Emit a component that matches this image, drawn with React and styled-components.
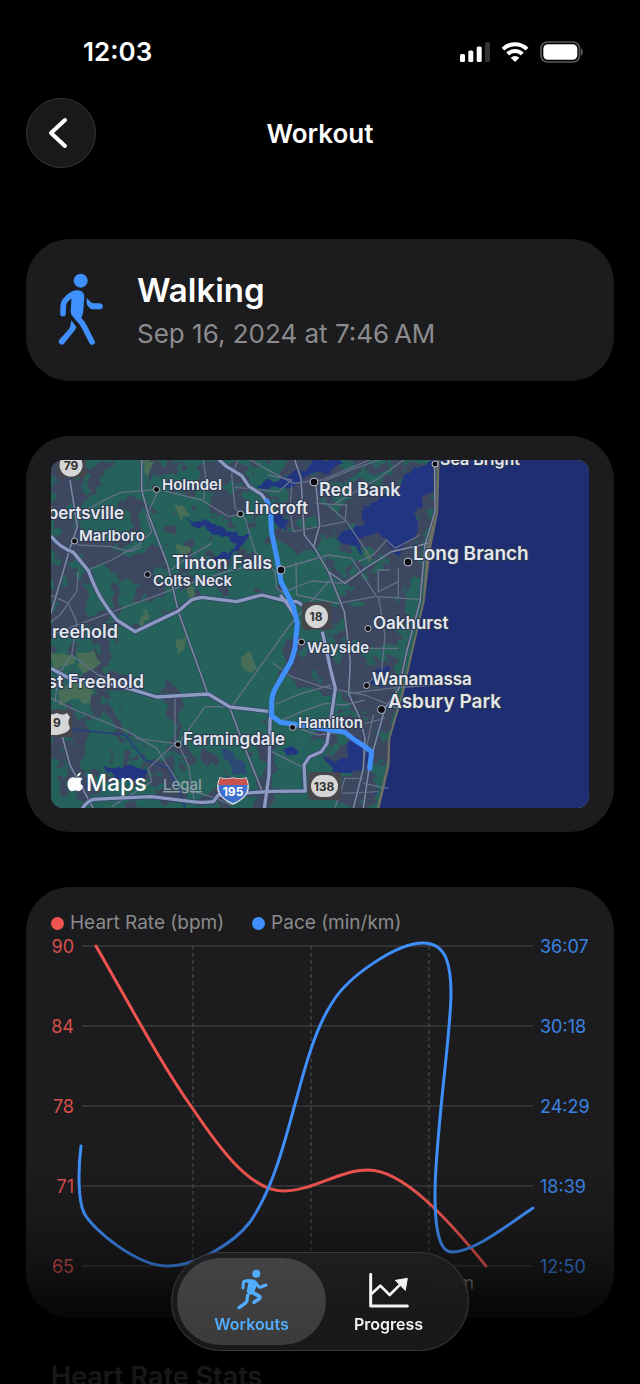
import React from 'react'
import styled, { createGlobalStyle, css } from 'styled-components'

const GlobalStyle = createGlobalStyle`
* {
    box-sizing: border-box;
}
body {
    margin: 0;
    background: #000;
    color: #fff;
    font-family: Inter, "Liberation Sans", sans-serif;
}
`

const Screen = styled.div`
position: relative;
height: 100vh;
display: flex;
flex-direction: column;
overflow: hidden;
background: #000;
`;

const StatusBar = styled.div`
display: flex;
align-items: center;
justify-content: space-between;
flex: none;
height: 84px;
padding: 20px 56px 0 83px;
`;

const Time = styled.span`
font-size: 26px;
font-weight: 600;
line-height: 32px;
`;

const StatusIcons = styled.div`
display: flex;
align-items: center;
gap: 11px;
`;

const NavBar = styled.header`
display: grid;
grid-template-columns: 70px 1fr 70px;
align-items: center;
flex: none;
margin-top: 14px;
padding: 0 26px;
`;

const BackButton = styled.button`
width: 70px;
height: 70px;
display: flex;
align-items: center;
justify-content: center;
padding: 0 6px 0 0;
border: 1px solid #363636;
border-radius: 50%;
background: #191919;
color: #fff;
cursor: pointer;
`;

const NavTitle = styled.h1`
margin: 0;
padding-top: 2px;
font-size: 26px;
font-weight: 600;
line-height: 32px;
text-align: center;
`;

const Content = styled.main`
flex: 1;
min-height: 0;
display: flex;
flex-direction: column;
gap: 55px;
padding: 71px 26px 0;
overflow-y: auto;
scrollbar-width: none;
`;

const Card = styled.section`
flex: none;
border-radius: 44px;
background: #1c1c1e;
padding: ${({ $pad }) => $pad};
`;

const Hero = styled.div`
display: flex;
align-items: center;
gap: 32px;
height: 86px;
`;

const HeroText = styled.div`
padding-top: 4px;
`;

const HeroTitle = styled.h2`
margin: 0;
font-size: 33px;
font-weight: 600;
line-height: 44px;
`;

const HeroDate = styled.p`
margin: 0;
font-size: 26px;
line-height: 44px;
color: #8b8b8d;
`;

const MapFrame = styled.div`
border-radius: 12px;
overflow: hidden;
background: #28625c;

svg {
    display: block;
    width: 100%;
    height: auto;
}
`;

const MapLabel = styled.text`
font-size: ${({ $size }) => $size}px;
font-weight: 600;
fill: #e3e7ee;
stroke: #2c3750;
stroke-width: 2px;
stroke-linejoin: round;
paint-order: stroke;
`;

const ShieldText = styled.text`
font-size: 12px;
font-weight: 700;
text-anchor: middle;
fill: ${({ $light }) => ($light ? '#fff' : '#333')};
`;

const MapsWordmark = styled.text`
font-size: 23px;
font-weight: 500;
fill: #fff;
`;

const LegalText = styled.text`
font-size: 15px;
font-weight: 500;
fill: #8ba3a6;
text-decoration: underline;
`;

const Legend = styled.div`
display: flex;
align-items: center;
gap: 28px;
height: 20px;
`;

const LegendItem = styled.span`
display: flex;
align-items: center;
gap: 6px;
font-size: 19px;
line-height: 20px;
color: #8b8b8d;

&::before {
    content: '';
    width: 13px;
    height: 13px;
    border-radius: 50%;
    background: ${({ $color }) => $color};
}
`;

const ChartSvg = styled.svg`
display: block;
width: 100%;
height: auto;
overflow: visible;
`;

const AxisText = styled.text`
font-size: 18px;
fill: ${({ $color }) => $color};
text-anchor: ${({ $end }) => ($end ? 'end' : 'start')};
`;

const StatsHeading = styled.h2`
flex: none;
margin: -12px 0 0;
padding-left: 25px;
font-size: 27px;
font-weight: 600;
line-height: 32px;
`;

const BottomFade = styled.div`
position: absolute;
left: 0;
right: 0;
bottom: 0;
height: 230px;
pointer-events: none;
background: linear-gradient(rgba(0,0,0,0), rgba(0,0,0,0.08) 25%, rgba(0,0,0,0.36) 49%, rgba(0,0,0,0.64) 63%, rgba(0,0,0,0.78) 72%, rgba(0,0,0,0.9) 85%, rgba(0,0,0,0.91));
`;

const TabBar = styled.nav`
position: absolute;
left: 50%;
bottom: 33px;
transform: translateX(-50%);
display: flex;
padding: 5px;
border: 1px solid #3b3b3b;
border-radius: 50px;
background: linear-gradient(rgba(32,32,32,0.88), rgba(27,27,27,0.92) 50%, rgba(25,25,25,0.97));
backdrop-filter: blur(2px);
`;

const Tab = styled.button`
width: 149px;
height: 87px;
display: flex;
flex-direction: column;
align-items: center;
justify-content: center;
gap: 3px;
padding: 0;
border: 0;
border-radius: 44px;
background: transparent;
color: #f2f2f2;
font-family: inherit;
font-size: 16px;
font-weight: 600;
line-height: 22px;
cursor: pointer;

& + & {
    margin-left: -12px;
}

${({ $active }) => $active && css`
background: linear-gradient(#434345, #3b3b3b);
color: #52adff;
`}
`;

const SignalIcon = () => (
    <svg width="30" height="22" viewBox="0 0 30 22" fill="#fff" aria-hidden="true">
        <rect x="0" y="13" width="5" height="8" rx="1.6" />
        <rect x="8.3" y="9.5" width="5" height="11.5" rx="1.6" />
        <rect x="16.7" y="5.5" width="5" height="15.5" rx="1.6" />
        <rect x="25" y="1" width="5" height="20" rx="1.6" fill="#333" />
    </svg>
)

const WifiIcon = () => (
    <svg width="28" height="22" viewBox="0 0 28 22" fill="none" stroke="#fff" strokeWidth="4" aria-hidden="true">
        <path d="M2 8.2A17 17 0 0 1 26 8.2" />
        <path d="M6.7 13A10.3 10.3 0 0 1 21.3 13" />
        <path d="M14 21L9.7 16.7a6 6 0 0 1 8.6 0z" fill="#fff" stroke="none" />
    </svg>
)

const BatteryIcon = () => (
    <svg width="44" height="22" viewBox="0 0 44 22" aria-hidden="true">
        <rect x="1" y="1" width="38.5" height="20" rx="6.5" fill="none" stroke="#5a5a5a" strokeWidth="1.7" />
        <rect x="3.3" y="3.3" width="34" height="15.4" rx="4.5" fill="#fff" />
        <path d="M41 7.5c2.6 1 2.6 6 0 7z" fill="#5a5a5a" />
    </svg>
)

const BackIcon = () => (
    <svg width="20" height="32" viewBox="0 0 20 32" fill="none" stroke="currentColor" strokeWidth="4" strokeLinecap="round" strokeLinejoin="round" aria-hidden="true">
        <path d="M17 3L3 16l14 13" />
    </svg>
)

const WalkIcon = () => (
    <svg width="47" height="74" viewBox="115 128 141 222" fill="none" stroke="#3f90fc" strokeWidth="17" strokeLinecap="round" strokeLinejoin="round" aria-hidden="true">
        <circle cx="183" cy="151" r="21" fill="#3f90fc" stroke="none" />
        <path d="M154 186Q164 180 174 180Q193 181 194 199L191 240Q190 254 186 261L178 268L156 255Q153 249 153 240L155 211Z" fill="#3f90fc" stroke="none" />
        <path d="M168 189Q158 190 148 199L138 209Q132 215 131 224L130 250" />
        <path d="M201 203L213 215Q217 219 223 219L241 219V237L219 237Q214 237 210 233L203 225Q201 222 201 218Z" fill="#3f90fc" stroke="none" />
        <circle cx="241" cy="228" r="8.5" fill="#3f90fc" stroke="none" />
        <path d="M168 256L187 278Q190 283 193 288L217 335" />
        <path d="M155 270L170 290Q168 298 163 303L132 341Q127 345 121 341Q115 336 119 328L148 296Q151 292 152 286Z" fill="#3f90fc" stroke="none" />
    </svg>
)

const RunIcon = () => (
    <svg width="34" height="42" viewBox="224 87 102 126" fill="none" stroke="currentColor" strokeWidth="9" strokeLinecap="round" strokeLinejoin="round" aria-hidden="true">
        <circle cx="288" cy="104" r="12" fill="currentColor" stroke="none" />
        <path d="M258 121H275Q285 121 289 130L291 134L283 155L284 162L268 168Q258 163 260 153L264 132Z" fill="currentColor" stroke="none" />
        <path d="M268 126H256Q250 126 249 132L248 147" />
        <path d="M286 131L295 143Q298 146 302 144L317 138" />
        <path d="M271 158L296 171Q301 174 297 179L281 190" strokeWidth="11" />
        <path d="M262 169L260 184Q259 189 254 193L236 206" strokeWidth="10" />
    </svg>
)

const ProgressIcon = () => (
    <svg width="42" height="42" viewBox="624 84 126 126" fill="none" stroke="currentColor" strokeWidth="9" strokeLinecap="round" strokeLinejoin="round" aria-hidden="true">
        <path d="M632 103V198H742" />
        <path d="M634 162L661 137L689 165L724 130" strokeWidth="8" />
        <path d="M707 121L742 115L736 150Z" fill="currentColor" strokeWidth="3" />
    </svg>
)

const places = [
    { name: 'Holmdel', x: 111, y: 30, size: 15, dot: [105.5, 29.5] },
    { name: 'Red Bank', x: 268, y: 36, size: 18, dot: [263, 22], big: true },
    { name: 'Lincroft', x: 194, y: 54, size: 17, dot: [189.5, 54] },
    { name: 'bertsville', x: 73, y: 59, size: 17, end: true },
    { name: 'Marlboro', x: 28, y: 81, size: 15, dot: [23.5, 81] },
    { name: 'Tinton Falls', x: 121, y: 109, size: 18, dot: [230, 110], big: true },
    { name: 'Colts Neck', x: 102, y: 126, size: 15, dot: [96.5, 114.5] },
    { name: 'Long Branch', x: 362, y: 100, size: 19, dot: [357, 102], big: true },
    { name: 'Sea Bright', x: 389, y: 5, size: 16, dot: [384, 4] },
    { name: 'Oakhurst', x: 322, y: 169, size: 17, dot: [317, 168.5] },
    { name: 'reehold', x: 67, y: 178, size: 18, end: true },
    { name: 'Wayside', x: 256, y: 193, size: 15, dot: [250.5, 182] },
    { name: 'st Freehold', x: 93, y: 228, size: 18, end: true },
    { name: 'Wanamassa', x: 321, y: 225, size: 17, dot: [315.5, 225.5] },
    { name: 'Asbury Park', x: 337, y: 248, size: 19, dot: [330.5, 249.5], big: true },
    { name: 'Hamilton', x: 247, y: 268, size: 15, dot: [241.5, 267.5] },
    { name: 'Farmingdale', x: 132, y: 285, size: 17, dot: [127, 284.5] },
]

// terrain and roads are drawn at three units per map pixel
const highways = [
    'M520 12L545 35L590 62L612 95L650 118L664 138',
    'M18 243Q40 275 85 292L130 347Q150 400 168 430Q190 465 215 495L270 530L400 468L440 434L470 427L575 440L650 420L715 436L755 440L780 455',
    'M18 640L70 668L165 681L250 700L335 726L490 717L555 756L670 769',
    'M832 530L856 640L871 700L858 790L846 865L829 890L793 906L777 930L781 1008L680 1009L520 1020L505 1040Q470 1044 440 1040L320 1025L200 1030L145 1033Q125 1040 112 1060',
    'M706 420Q755 480 757 510Q750 600 730 630Q690 690 682 735L675 800L672 960L658 1060',
]

const mediumRoads = [
    'M290 12V105L310 178L368 330L400 470L488 715',
    'M75 75L97 215L75 280L18 475',
    'M748 12L768 70L778 240L808 278L850 350L898 470L916 620L911 716L945 790L960 850L955 940L925 1060',
    'M1169 30L1170 170L1140 270L1125 440L1085 590L1062 700L1020 760L975 920L955 1060',
    'M52 845L75 930L115 1005L145 1060',
    'M812 80L824 210L806 275',
    'M850 350L900 385L960 340L1040 290L1150 265',
    'M555 760L600 880L650 1005',
]

const minorRoads = [
    'M100 180Q180 130 230 112L340 103L470 135L550 185L590 178',
    'M340 103L320 150L305 180L320 230L280 270L200 315L130 345',
    'M97 270L200 275L255 290L290 275',
    'M475 15L483 75L476 135',
    'M580 12L560 60L570 160L600 190L630 290L690 350L695 400L735 430',
    'M18 540L150 490L270 445L420 390L560 345L640 330',
    'M370 350L430 305L500 265',
    'M18 420L70 445L95 500L80 600L160 660L250 690',
    'M100 350L95 410L45 480L18 500',
    'M18 730L80 760L250 830L335 880L410 1000L500 1025L560 1050',
    'M80 600L40 660L30 740',
    'M390 730V865L310 940L320 980L200 1055',
    'M390 865L270 850',
    'M400 868L480 755H560L735 510L860 370',
    'M670 60L740 75L700 110L570 97',
    'M610 12L660 40L745 85L830 75L980 12',
    'M740 90L735 170L745 230L900 200L905 150L810 145',
    'M850 150L905 200L965 290',
    'M820 85L930 40L1010 12',
    'M870 145L1000 70L1080 12',
    'M720 410L800 378L890 385L980 330',
    'M695 345L850 300L920 310L995 425L1125 433',
    'M753 320L755 420L880 445L990 425',
    'M1000 345H1035M1000 345V410L1060 380V340M1060 380V430',
    'M1125 240L1050 280L1025 255L985 300L940 320',
    'M1000 425L1020 540L1010 650L960 690',
    'M940 580L1060 580M911 716L1030 700L1170 690',
    'M685 625L740 665L830 695L960 720L1060 760',
    'M685 750L770 715L860 690M700 800L770 770L840 745L900 750L960 735',
    'M745 815L820 840L900 830M960 805L1020 790',
    'M870 1060L900 970L955 970M955 985L1030 1000M890 1015L1000 1010',
    'M680 890L780 940M985 780L960 900',
    'M400 868L430 930L450 1050',
]

const slatePatches = [
    '18,15 60,15 110,60 120,120 95,150 70,120 50,200 18,210',
    '18,210 80,190 110,240 160,260 210,250 250,290 220,330 140,350 90,300 18,290',
    '240,290 330,270 350,310 330,350 360,390 340,420 290,430 260,390 220,400 210,350',
    '18,300 60,320 80,380 140,370 150,430 120,480 180,470 210,510 160,530 110,510 60,560 18,560',
    '330,15 420,15 380,50 350,40 320,70',
    '430,20 560,15 620,60 600,100 550,80 500,110 470,70',
    '520,100 590,110 620,150 570,190 530,160 490,170',
    '620,15 1170,15 1170,170 1060,620 1000,1060 900,1060 890,960 800,880 860,760 830,640 790,590 770,480 900,430 850,330 760,320 700,250 700,160 650,120',
    '740,540 860,520 910,640 900,760 820,830 740,810 760,700 710,650',
    '155,550 220,545 215,590 180,600 170,650 140,620',
    '110,640 240,640 260,680 200,700 180,740 150,710 90,690',
    '370,700 385,675 400,720 405,790 400,850 420,890 380,900 385,820 360,750',
    '50,760 110,770 140,810 110,860 70,850 70,900 50,930 30,890 18,860 18,780',
    '80,910 150,940 130,970 190,1000 120,1030 60,990',
    '300,930 370,900 400,950 380,1010 330,990',
    '640,830 710,850 770,880 760,940 700,930 690,1060 640,1060',
    '170,780 200,770 240,830 300,860 240,850 190,810',
]

const greenPatches = [
    '640,20 720,15 700,60 740,80 700,130 650,110 610,70',
    '730,290 810,270 820,330 790,350 840,420 790,440 740,420 715,370',
    '740,180 800,170 820,220 790,240 750,215',
    '850,100 950,60 1060,20 1010,70 920,110 880,125',
    '850,240 900,260 960,280 1020,300 950,350 880,340 840,300',
    '770,490 830,530 880,560 900,600 850,610 800,570 770,540',
    '930,570 1010,600 1040,590 1035,620 970,625',
    '720,700 850,700 900,740 880,800 790,840 730,800',
    '690,840 830,850 860,910 800,920 770,1010 710,1040 690,960',
    '880,770 950,760 940,790 890,800',
    '880,370 910,350 930,400 890,410',
]

const olivePatches = [
    '290,15 330,15 320,40 300,70',
    '395,150 425,160 440,185 410,195 390,175',
    '400,265 430,270 445,300 410,300 390,280',
    '590,610 620,595 635,640 610,655 588,635',
    '18,595 80,605 90,625 40,635 60,650 18,645',
    '100,595 150,592 160,625 130,650 95,640',
    '60,690 120,680 148,712 130,745 90,730 40,750 45,710',
    '395,560 420,545 425,580 395,605',
    '280,500 300,465 310,490 290,515',
    '420,400 445,390 450,430 430,440',
    '965,290 985,310 970,320 955,305',
]

const waterPatches = [
    '430,195 450,200 480,205 470,183 500,205 525,215 560,235 612,238 605,262 575,287 550,310 510,320 480,335 440,345 500,308 560,288 575,270 540,250 500,235 470,215 435,210',
    '640,90 680,75 720,70 745,55 790,40 810,15 890,15 870,45 830,55 790,60 760,85 720,100 690,95 650,105',
    '1080,60 1130,35 1165,15 1169,110 1140,115 1120,170 1118,230 1085,275 1050,300 1030,260 1000,235 935,250 950,295 915,270 870,250 910,225 955,210 950,175 990,130 1030,115 1040,100 1060,110',
    '690,165 720,200 735,195 715,225 690,200',
    '175,930 200,940 240,938 300,940 300,975 230,975 200,960',
    '715,880 740,870 762,890 735,905',
    '828,902 870,918 905,905 905,865 935,850 970,880 978,905 965,940 920,960 880,955 855,930',
    '1000,640 1035,630 1030,670 980,685 1060,700 970,690',
    '980,1010 1005,1000 985,1020',
]

const Road = styled.path`
fill: none;
stroke: ${({ $color }) => $color};
stroke-width: ${({ $width }) => $width};
stroke-linejoin: round;
`;

const Terrain = () => (
    <>
        <rect x="0" y="0" width="1640" height="1080" fill="#28625c" />
        {slatePatches.map((p) => <polygon key={p} points={p} fill="#3c475e" />)}
        {greenPatches.map((p) => <polygon key={p} points={p} fill="#28625c" />)}
    </>
)

const RouteMap = () => (
    <svg viewBox="0 0 538 348" role="img" aria-label="Route map">
        <defs>
            <filter id="rough" x="0" y="0" width="100%" height="100%">
                <feTurbulence type="fractalNoise" baseFrequency="0.06" numOctaves="3" seed="4" />
                <feDisplacementMap in="SourceGraphic" scale="34" xChannelSelector="R" yChannelSelector="G" />
            </filter>
            <filter id="roughWater" x="0" y="0" width="100%" height="100%">
                <feTurbulence type="fractalNoise" baseFrequency="0.1" numOctaves="2" seed="9" />
                <feDisplacementMap in="SourceGraphic" scale="10" xChannelSelector="R" yChannelSelector="G" />
            </filter>
            <filter id="slateSpecks" x="0" y="0" width="100%" height="100%" colorInterpolationFilters="sRGB">
                <feTurbulence type="fractalNoise" baseFrequency="0.055" numOctaves="3" seed="12" />
                <feColorMatrix values="0 0 0 0 0.235  0 0 0 0 0.278  0 0 0 0 0.369  18 0 0 0 -10.6" />
            </filter>
            <filter id="greenSpecks" x="0" y="0" width="100%" height="100%" colorInterpolationFilters="sRGB">
                <feTurbulence type="fractalNoise" baseFrequency="0.05" numOctaves="3" seed="31" />
                <feColorMatrix values="0 0 0 0 0.157  0 0 0 0 0.384  0 0 0 0 0.361  18 0 0 0 -11.2" />
            </filter>
            <clipPath id="west">
                <path d="M0 0H215V45L232 130L150 138L84 170L60 165L40 215L70 240L80 275L150 285L215 260V348H0Z" />
            </clipPath>
            <clipPath id="east">
                <path d="M215 0H384L372 150L330 348H215V270L245 190V160L225 110Z" />
            </clipPath>
        </defs>

        <g filter="url(#rough)">
            <g transform="translate(-6 -5) scale(0.33333)">
                <Terrain />
            </g>
        </g>
        <g clipPath="url(#west)">
            <rect width="538" height="348" filter="url(#slateSpecks)" />
        </g>
        <g clipPath="url(#east)">
            <rect width="538" height="348" filter="url(#greenSpecks)" />
        </g>
        <g filter="url(#roughWater)">
            <g transform="translate(-6 -5) scale(0.33333)">
                <rect width="1640" height="1080" fill="none" />
                {olivePatches.map((p) => <polygon key={p} points={p} fill="#4a6e58" />)}
                <polygon points="525,880 560,890 600,930 605,960 570,950 540,915" fill="#2c4a74" />
                {waterPatches.map((p) => <polygon key={p} points={p} fill="#233682" />)}
            </g>
        </g>

        <g transform="translate(-6 -5) scale(0.33333)">
            <path d="M85 823L240 840L300 915L370 940L400 1000L420 1060" fill="none" stroke="#22407f" strokeWidth="5" />
            <path d="M1176 0L1172 170L1146 270L1133 440L1098 590L1068 720L1030 850L1026 930L992 1075H1640V0Z" fill="#6d6f62" />
            <path d="M1184 0L1180 170L1158 280L1139 440L1104 590L1075 720L1036 850L1034 930L1000 1075H1640V0Z" fill="#1f2e72" />
            {minorRoads.map((d) => <Road key={d} d={d} $color="#647088" $width={4} />)}
            {mediumRoads.map((d) => <Road key={d} d={d} $color="#333f58" $width={8} />)}
            {mediumRoads.map((d) => <Road key={d} d={d} $color="#7a86a2" $width={5} />)}
            {highways.map((d) => <Road key={d} d={d} $color="#36456a" $width={15} />)}
            {highways.map((d) => <Road key={d} d={d} $color="#8c99c0" $width={10} />)}
            <Road
                d="M666 138L676 170L680 235L696 310L708 380L745 455L757 505L750 580L738 620L697 690Q681 715 680 740V782L706 802L780 812L900 832L925 852L955 872L980 890L974 940"
                $color="#3f90fc"
                $width={15}
                strokeLinecap="round"
            />
        </g>

        {places.map(({ name, x, y, size, dot, end, big }) => (
            <g key={name}>
                {dot && <circle cx={dot[0]} cy={dot[1]} r={big ? 4 : 3} fill="#0c0c10" stroke="#b9bec9" strokeWidth="1" />}
                <MapLabel x={x} y={y} $size={size} textAnchor={end ? 'end' : 'start'}>{name}</MapLabel>
            </g>
        ))}

        <rect x="6" y="-8" width="29" height="26" rx="4" fill="#45474c" />
        <circle cx="20" cy="5" r="11.5" fill="#d6d6d6" />
        <ShieldText x="20" y="10">79</ShieldText>
        <rect x="251" y="142" width="29" height="28" rx="4" fill="#45474c" />
        <circle cx="265.5" cy="156.5" r="11.5" fill="#d6d6d6" />
        <ShieldText x="265" y="161">18</ShieldText>
        <rect x="257" y="312" width="33" height="28" rx="4" fill="#45474c" />
        <rect x="260" y="315" width="27" height="22" rx="11" fill="#d6d6d6" />
        <ShieldText x="273" y="331">138</ShieldText>
        <rect x="-10" y="250" width="31" height="27" rx="4" fill="#45474c" />
        <path d="M-8 253Q0 256 6 253Q12 256 16 253L19 257Q16 262 19 268Q18 273 6 275H-8Z" fill="#d6d6d6" />
        <ShieldText x="6" y="267">9</ShieldText>
        <path d="M169 318Q175 320 182 318Q189 320 195 318Q203 335 182 344Q161 335 169 318Z" fill="#3c6fd0" stroke="#d8dce6" strokeWidth="1.5" />
        <path d="M169 318Q175 320 182 318Q189 320 195 318L197 325H167Z" fill="#c9544f" />
        <ShieldText x="182" y="336" $light>195</ShieldText>

        <path d="M29 317.5c.3-2 1.7-3.6 3.7-4.2c.2 2.1-1.5 4.2-3.7 4.2zM22.5 319c2-1.3 4.2-.3 5.6.2c1.8-.6 4-1.5 6.5.5c-3 2.2-2.5 6 .8 7.4c-1.2 3-3 5.2-4.8 5.2c-1.3 0-1.7-.7-3.2-.7s-2 .7-3.3.7c-4 0-7-10-1.6-13.3z" transform="translate(-3 -1)" fill="#fff" />
        <MapsWordmark x="35" y="331">Maps</MapsWordmark>
        <a href="#legal">
            <LegalText x="112" y="330">Legal</LegalText>
        </a>
    </svg>
)

const RED = '#f0544f'
const BLUE = '#3f90fc'

const rows = [
    { y: 14, bpm: '90', pace: '36:07' },
    { y: 94, bpm: '84', pace: '30:18' },
    { y: 174, bpm: '78', pace: '24:29' },
    { y: 254, bpm: '71', pace: '18:39' },
    { y: 334, bpm: '65', pace: '12:50' },
]

const ticks = [
    { x: 142, label: '14m' },
    { x: 260, label: '29m' },
    { x: 378, label: '44m' },
]

const PaceChart = () => (
    <ChartSvg viewBox="0 1 538 359" role="img" aria-label="Heart rate and pace over time">
        {rows.map(({ y, bpm, pace }) => (
            <g key={bpm}>
                <line x1="31" x2="482" y1={y} y2={y} stroke="#3a3a3c" strokeWidth="1.5" />
                <AxisText x="23" y={y + 7} $color="#d94f4b" $end>{bpm}</AxisText>
                <AxisText x="489" y={y + 7} $color="#3a82e2">{pace}</AxisText>
            </g>
        ))}
        {ticks.map(({ x, label }) => (
            <g key={label}>
                <line x1={x} x2={x} y1="14" y2="334" stroke="#505052" strokeWidth="1" strokeDasharray="4 3" />
                <AxisText x={x + 6} y="357" $color="#8b8b8d">{label}</AxisText>
            </g>
        ))}
        <g fill="none" strokeWidth="3" strokeLinecap="round">
            <path stroke={RED} d="M45 14C76 68 110 132 142 177C165 211 198 259 232 259C262 259 288 238 317 238C352 238 396 286 435 334" />
            <path stroke={BLUE} d="M30 214C27 238 27 268 33 281C42 298 86 334 116 334C146 334 184 310 199 290C240 232 246 124 281 71C297 44 346 11 372 11C396 11 400 34 400 62C400 100 384 206 384 262C384 300 389 320 401 320C423 320 455 294 482 276" />
        </g>
    </ChartSvg>
)

const App = () => {
    return (
        <Screen>
            <GlobalStyle />
            <StatusBar>
                <Time>12:03</Time>
                <StatusIcons>
                    <SignalIcon />
                    <WifiIcon />
                    <BatteryIcon />
                </StatusIcons>
            </StatusBar>
            <NavBar>
                <BackButton aria-label="Back"><BackIcon /></BackButton>
                <NavTitle>Workout</NavTitle>
            </NavBar>

            <Content>
                <Card $pad="28px 32px">
                    <Hero>
                        <WalkIcon />
                        <HeroText>
                            <HeroTitle>Walking</HeroTitle>
                            <HeroDate>Sep 16, 2024 at 7:46{'\u202f'}AM</HeroDate>
                        </HeroText>
                    </Hero>
                </Card>
                <Card $pad="24px 25px">
                    <MapFrame>
                        <RouteMap />
                    </MapFrame>
                </Card>
                <Card $pad="26px 25px">
                    <Legend>
                        <LegendItem $color={RED}>Heart Rate (bpm)</LegendItem>
                        <LegendItem $color={BLUE}>Pace (min/km)</LegendItem>
                    </Legend>
                    <PaceChart />
                </Card>
                <StatsHeading>Heart Rate Stats</StatsHeading>
            </Content>

            <BottomFade />
            <TabBar>
                <Tab $active>
                    <RunIcon />
                    Workouts
                </Tab>
                <Tab>
                    <ProgressIcon />
                    Progress
                </Tab>
            </TabBar>
        </Screen>
    )
}

export default App
